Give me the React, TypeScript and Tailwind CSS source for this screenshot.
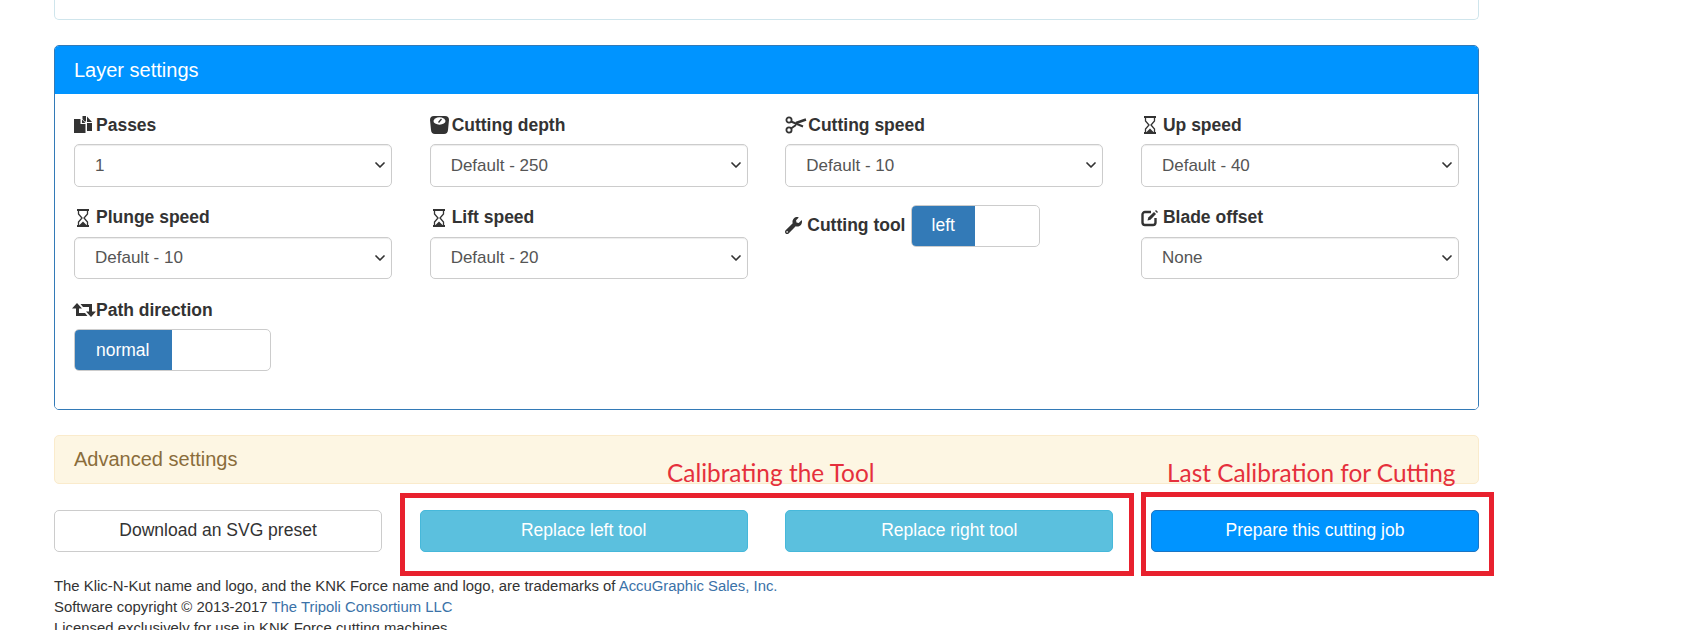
import { ChevronDown } from 'lucide-react';
import { FaWrench } from 'react-icons/fa';

const CopyIcon = () => (
  <svg viewBox="0 0 18 18" className="w-[18px] h-[18px] shrink-0 mr-1" fill="#333">
    <path d="M0 3h6.500v5H11.500v9H0z" />
    <path d="M8 3.500l3.500 3.500H8z" />
    <path d="M8.500 0h3.500v5.500h-1.500L8.500 3z" />
    <path d="M13 .5l5 5.500h-5zM13 7h5v8h-5z" />
  </svg>
);

const ScaleIcon = () => (
  <svg viewBox="0 0 19 18" className="w-[19px] h-[18px] shrink-0 mr-[3px]" fill="#333">
    <path d="M4 0h11q4 0 4 4l-1 10q-.3 4-4 4H5q-3.700 0-4-4L0 4q0-4 4-4z" />
    <ellipse cx="9.500" cy="5" rx="6" ry="3.700" fill="#fff" />
    <path d="M8.500 6.500l3-3.500" stroke="#333" strokeWidth="1.300" />
  </svg>
);

const ScissorsIcon = () => (
  <svg viewBox="0 0 22 18" className="w-[22px] h-[18px] shrink-0 mr-px" fill="none" stroke="#333">
    <circle cx="4" cy="4" r="2.600" strokeWidth="1.800" />
    <circle cx="4" cy="14" r="2.600" strokeWidth="1.800" />
    <path d="M6 5.500l12 5M6 12.500L11 9" strokeWidth="2" />
    <path d="M11 7l10-3.500" strokeWidth="2.400" />
  </svg>
);

const HourglassIcon = () => (
  <svg viewBox="0 0 18 18" className="w-[18px] h-[18px] shrink-0 mr-1" fill="none" stroke="#333">
    <path d="M3 1h12M3 17h12" strokeWidth="2" />
    <path d="M4.500 2v3l3.500 4-3.500 4v3M13.500 2v3L10 9l3.500 4v3" strokeWidth="1.300" />
    <path d="M6 15.500l3-3 3 3v1H6z" fill="#333" stroke="none" />
  </svg>
);

const EditIcon = () => (
  <svg viewBox="0 0 18 18" className="w-[18px] h-[18px] shrink-0 mr-1" fill="none" stroke="#333">
    <path d="M10 3H4a2.500 2.500 0 0 0-2.500 2.500v8A2.500 2.500 0 0 0 4 16h8a2.500 2.500 0 0 0 2.500-2.500V9" strokeWidth="2.400" />
    <path d="M6.500 11.500l.8-3L13 3l2 2-5.500 5.700z" fill="#333" stroke="none" />
    <path d="M15 1l2 2-1 1-2-2z" fill="#333" stroke="none" />
  </svg>
);

const RetweetIcon = () => (
  <svg viewBox="0 0 24 14" className="w-[24px] h-[14px] shrink-0 -ml-[2px]" fill="#333">
    <path d="M5 0l5 5.500H7V10h6l2.500 3H4V5.500H0z" />
    <path d="M19 14l-5-5.500h3V4h-6L8.500 1H20v7.500h4z" />
  </svg>
);

type FieldProps = {
  icon: React.ReactNode;
  label: string;
  value: string;
};

const Label = ({ icon, label }: { icon: React.ReactNode; label: string }) => (
  <div className="flex items-center h-[22px] font-bold text-[17.500px] text-[#333] whitespace-nowrap">
    {icon}
    <span>{label}</span>
  </div>
);

const Field = ({ icon, label, value }: FieldProps) => (
  <div>
    <Label icon={icon} label={label} />
    <div className="relative mt-[8px]">
      <select
        defaultValue={value}
        className="appearance-none block w-full h-[42.500px] pl-5 border border-[#ccc] rounded-[5px] bg-white text-[17px] text-[#555] shadow-[inset_0_1px_1px_rgba(0,0,0,0.075)]"
      >
        <option>{value}</option>
      </select>
      <ChevronDown className="absolute right-[4px] top-[13px] w-4 h-4 text-[#333] pointer-events-none" strokeWidth={2.6} />
    </div>
  </div>
);

const Toggle = ({ text, className }: { text: string; className: string }) => (
  <div className={`flex h-[42px] border border-[#ccc] rounded-[5px] overflow-hidden bg-white ${className}`}>
    <div className="w-1/2 -my-px -ml-px flex items-center justify-center bg-[#337ab7] text-white text-[17.500px]">{text}</div>
  </div>
);

const Row = ({ className, children }: { className: string; children: React.ReactNode }) => (
  <button className={`h-[42px] rounded-[5px] border text-[17.500px] ${className}`}>{children}</button>
);

export default function App() {
  return (
    <div className="relative h-[630px] overflow-hidden bg-white font-['Liberation_Sans',Arial,sans-serif]">
      <div className="w-[1425px] ml-[54px]">
        <div className="h-5 border border-t-0 border-[#cfe5ec] rounded-b-[5px]" />

        <div className="mt-[25px] border border-[#337ab7] rounded-[5px] overflow-hidden">
          <div className="h-[48px] pl-[19px] flex items-center bg-[#0094ff] text-white text-[20px]">Layer settings</div>
          <div className="grid grid-cols-4 gap-x-[37.600px] gap-y-5 px-[19px] pt-5 pb-[37px] bg-white auto-rows-[72.500px]">
            <Field icon={<CopyIcon />} label="Passes" value="1" />
            <Field icon={<ScaleIcon />} label="Cutting depth" value="Default - 250" />
            <Field icon={<ScissorsIcon />} label="Cutting speed" value="Default - 10" />
            <Field icon={<HourglassIcon />} label="Up speed" value="Default - 40" />
            <Field icon={<HourglassIcon />} label="Plunge speed" value="Default - 10" />
            <Field icon={<HourglassIcon />} label="Lift speed" value="Default - 20" />
            <div className="flex items-start gap-[6px]">
              <div className="mt-[8px]">
                <Label icon={<FaWrench className="w-[17px] h-[17px] shrink-0 mr-[5px]" color="#333" />} label="Cutting tool" />
              </div>
              <Toggle text="left" className="w-[129px] -mt-[2px]" />
            </div>
            <Field icon={<EditIcon />} label="Blade offset" value="None" />
            <div>
              <Label icon={<RetweetIcon />} label="Path direction" />
              <Toggle text="normal" className="mt-[8px] w-[197px]" />
            </div>
          </div>
        </div>

        <div className="mt-[25px] h-[49px] pl-[19px] flex items-center border border-[#faebcc] rounded-[5px] bg-[#fdf6e3] text-[20px] text-[#8a6d3b]">
          Advanced settings
        </div>

        <div className="mt-[26px] grid grid-cols-4 gap-x-[37.600px]">
          <Row className="bg-white border-[#ccc] text-[#333]">Download an SVG preset</Row>
          <Row className="bg-[#5bc0de] border-[#46b8da] text-white">Replace left tool</Row>
          <Row className="bg-[#5bc0de] border-[#46b8da] text-white">Replace right tool</Row>
          <Row className="bg-[#0094ff] border-[#1a75c4] text-white">Prepare this cutting job</Row>
        </div>

        <div className="mt-[24px] text-[14.880px] leading-[21px] text-[#333]">
          <p>
            The Klic-N-Kut name and logo, and the KNK Force name and logo, are trademarks of{' '}
            <a className="text-[#3b72a8]">AccuGraphic Sales, Inc.</a>
          </p>
          <p>
            Software copyright © 2013-2017 <a className="text-[#3b72a8]">The Tripoli Consortium LLC</a>
          </p>
          <p>Licensed exclusively for use in KNK Force cutting machines.</p>
        </div>
      </div>

      {/* annotations drawn over the screenshot */}
      <div className="absolute left-[667px] top-[459px] text-[24.400px] leading-7 text-[#e5303c] font-['Lato',sans-serif] whitespace-nowrap">
        Calibrating the Tool
      </div>
      <div className="absolute left-[1167px] top-[459px] text-[24.400px] leading-7 text-[#e5303c] font-['Lato',sans-serif] whitespace-nowrap">
        Last Calibration for Cutting
      </div>
      <div className="absolute left-[400px] top-[493px] w-[734px] h-[83px] border-[5px] border-[#e8212e]" />
      <div className="absolute left-[1141px] top-[492px] w-[353px] h-[84px] border-[5px] border-[#e8212e]" />
    </div>
  );
}
